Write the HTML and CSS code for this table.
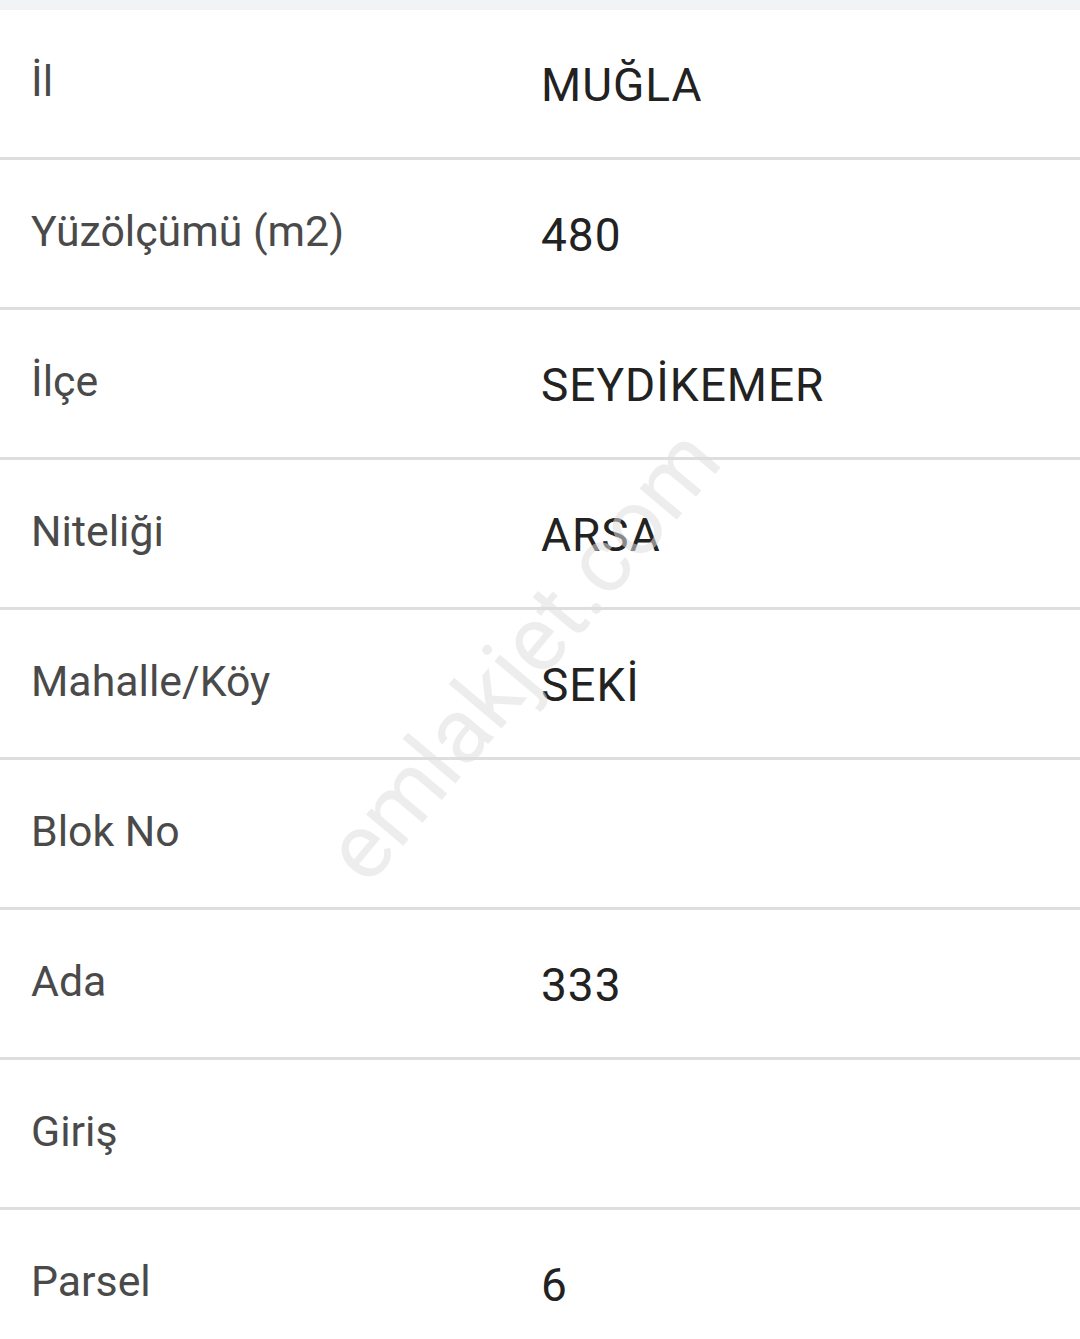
FILE: index.html
```html
<!DOCTYPE html>
<html lang="tr">
<head>
<meta charset="utf-8">
<title>İlan Detayı</title>
<link rel="stylesheet" href="styles.css">
</head>
<body>
<div class="page">
  <div class="topbar"></div>
  <div class="list">
    <div class="row"><div class="label">İl</div><div class="value">MUĞLA</div></div>
    <div class="row"><div class="label">Yüzölçümü (m2)</div><div class="value">480</div></div>
    <div class="row"><div class="label">İlçe</div><div class="value">SEYDİKEMER</div></div>
    <div class="row"><div class="label">Niteliği</div><div class="value">ARSA</div></div>
    <div class="row"><div class="label">Mahalle/Köy</div><div class="value">SEKİ</div></div>
    <div class="row"><div class="label">Blok No</div><div class="value"></div></div>
    <div class="row"><div class="label">Ada</div><div class="value">333</div></div>
    <div class="row"><div class="label">Giriş</div><div class="value"></div></div>
    <div class="row"><div class="label">Parsel</div><div class="value">6</div></div>
  </div>
  <div class="watermark">emlakjet.com</div>
</div>
</body>
</html>
```
FILE: styles.css
```css
html, body {
  margin: 0;
  padding: 0;
  background: #ffffff;
}
.page {
  position: relative;
  width: 1080px;
  height: 1339px;
  overflow: hidden;
  font-family: Roboto, "Noto Sans", sans-serif;
}
.topbar {
  height: 10px;
  background: #f2f3f5;
}
.list {
  display: flex;
  flex-direction: column;
}
.row {
  display: flex;
  align-items: center;
  height: 147px;
  border-bottom: 3px solid #dedede;
  box-sizing: content-box;
}
.row:last-child {
  border-bottom: none;
}
.label {
  width: 510px;
  padding-left: 31px;
  font-size: 42.8px;
  color: #4a4a4a;
  margin-top: -6px;
}
.value {
  flex: 1;
  font-size: 46px;
  letter-spacing: 1px;
  color: #222222;
  margin-top: 2px;
}
.watermark {
  position: absolute;
  left: 522px;
  top: 655px;
  transform: translate(-50%, -50%) rotate(-50deg);
  font-size: 92px;
  color: rgba(222, 222, 222, 0.55);
  white-space: nowrap;
  pointer-events: none;
}
```
